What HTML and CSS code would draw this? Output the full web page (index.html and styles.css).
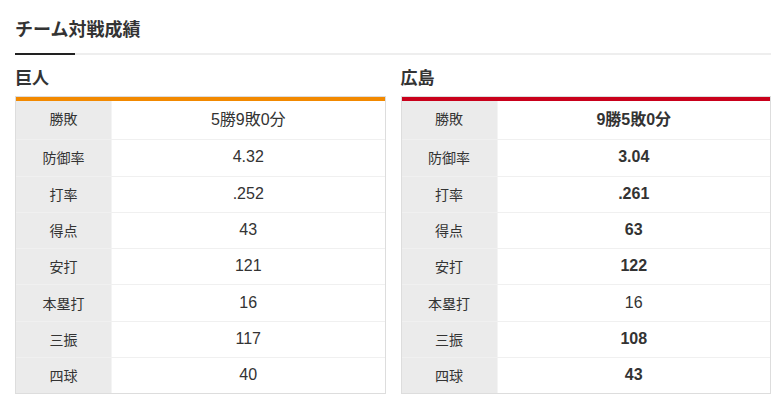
FILE: index.html
```html
<!DOCTYPE html>
<html lang="ja">
<head>
<meta charset="utf-8">
<link rel="stylesheet" href="styles.css">
</head>
<body>
<section class="page">
  <h2 class="title">チーム対戦成績</h2>
  <div class="title-line"></div>
  <div class="teams">
    <div class="team">
      <h3 class="team-name">巨人</h3>
      <div class="stats">
        <div class="bar bar-giants"></div>
        <div class="rows">
          <div class="row"><div class="label">勝敗</div><div class="value">5勝9敗0分</div></div>
          <div class="row"><div class="label">防御率</div><div class="value">4.32</div></div>
          <div class="row"><div class="label">打率</div><div class="value">.252</div></div>
          <div class="row"><div class="label">得点</div><div class="value">43</div></div>
          <div class="row"><div class="label">安打</div><div class="value">121</div></div>
          <div class="row"><div class="label">本塁打</div><div class="value">16</div></div>
          <div class="row"><div class="label">三振</div><div class="value">117</div></div>
          <div class="row"><div class="label">四球</div><div class="value">40</div></div>
        </div>
      </div>
    </div>
    <div class="team">
      <h3 class="team-name">広島</h3>
      <div class="stats">
        <div class="bar bar-carp"></div>
        <div class="rows">
          <div class="row"><div class="label">勝敗</div><div class="value win">9勝5敗0分</div></div>
          <div class="row"><div class="label">防御率</div><div class="value win">3.04</div></div>
          <div class="row"><div class="label">打率</div><div class="value win">.261</div></div>
          <div class="row"><div class="label">得点</div><div class="value win">63</div></div>
          <div class="row"><div class="label">安打</div><div class="value win">122</div></div>
          <div class="row"><div class="label">本塁打</div><div class="value">16</div></div>
          <div class="row"><div class="label">三振</div><div class="value win">108</div></div>
          <div class="row"><div class="label">四球</div><div class="value win">43</div></div>
        </div>
      </div>
    </div>
  </div>
</section>
</body>
</html>
```

FILE: styles.css
```css
html, body {
  margin: 0;
  padding: 0;
  background: #fff;
}
body {
  font-family: "Liberation Sans", "Noto Sans CJK JP", sans-serif;
  color: #333;
}
.page {
  padding: 17px 8px 0 15px;
}
.title {
  margin: 0;
  font-size: 18px;
  line-height: 26px;
  font-weight: bold;
  color: #333;
}
.title-line {
  margin-top: 10px;
  height: 2px;
  background: linear-gradient(to right, #222 0, #222 60px, #eee 60px, #eee 100%);
}
.teams {
  display: grid;
  grid-template-columns: 1fr 1fr;
  column-gap: 15px;
}
.team-name {
  margin: 12px 0 5px;
  font-size: 17px;
  line-height: 24px;
  font-weight: bold;
  color: #333;
}
.stats {
  border: 1px solid #ddd;
}
.bar {
  height: 4px;
}
.bar-giants {
  background: #f28900;
}
.bar-carp {
  background: #c9001b;
}
.row {
  display: flex;
  height: 36.3px;
  box-sizing: border-box;
  border-bottom: 1px solid #f0f0f0;
}
.row:first-child {
  height: 39.3px;
}
.row:last-child {
  border-bottom: none;
  height: 35.3px;
}
.label {
  width: 96px;
  flex: none;
  display: flex;
  align-items: center;
  justify-content: center;
  font-size: 14px;
  background: #ebebeb;
  border-right: 1px solid #f4f4f4;
  box-sizing: border-box;
  padding-bottom: 1px;
}
.value {
  flex: 1;
  display: flex;
  align-items: center;
  justify-content: center;
  font-size: 16px;
  background: #fff;
  padding-bottom: 1px;
}
.row:first-child .label,
.row:first-child .value {
  padding-bottom: 4px;
}
.value.win {
  font-weight: bold;
}
```
